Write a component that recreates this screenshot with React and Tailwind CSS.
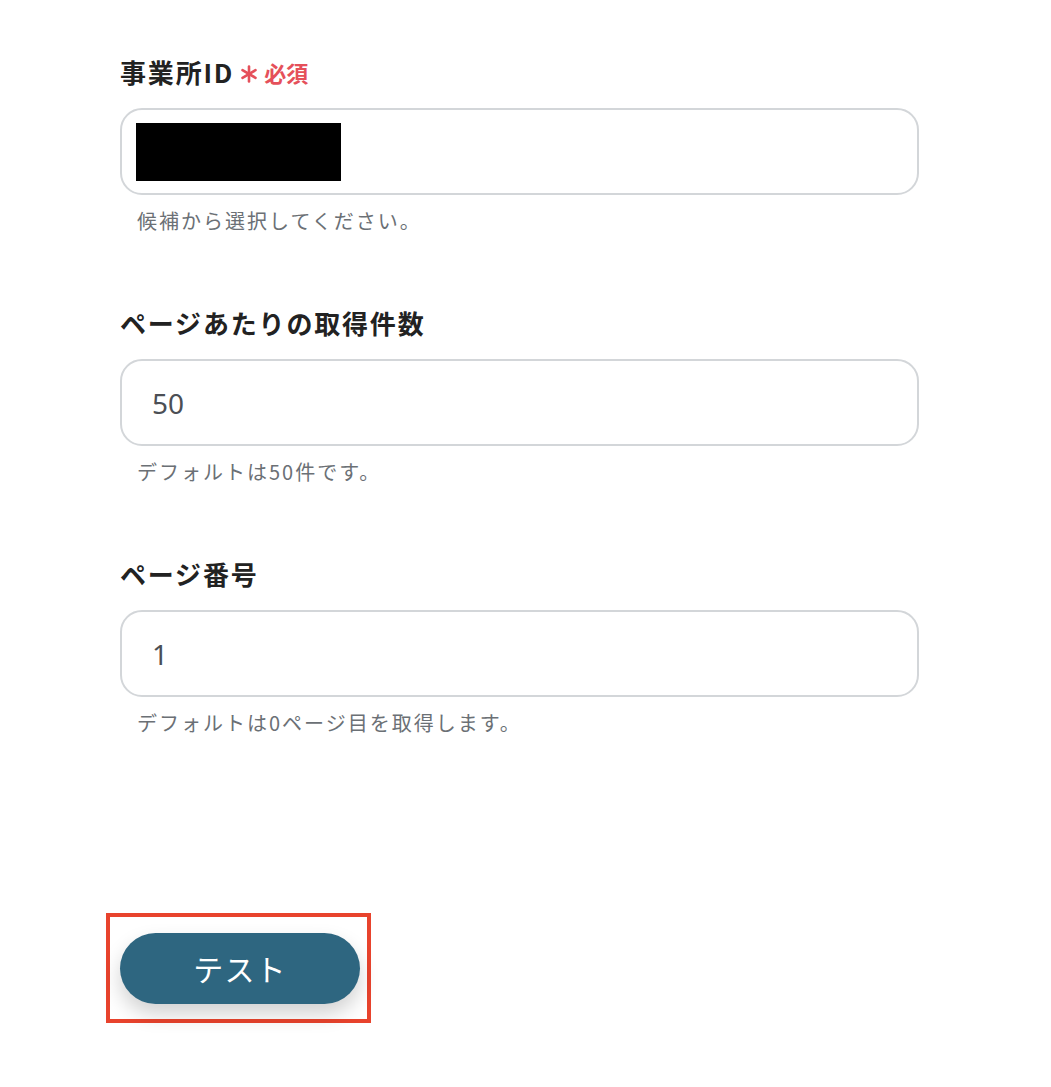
const FONT = { fontFamily: '"Noto Sans CJK JP", "Noto Sans", sans-serif' };

function Asterisk() {
  return (
    <svg width="18" height="18" viewBox="0 0 18 18" className="mr-[6px] mt-[4px]">
      <g stroke="#e5505a" strokeWidth="2.6" strokeLinecap="round">
        <line x1="9" y1="1.5" x2="9" y2="16.5" />
        <line x1="2.5" y1="5.2" x2="15.5" y2="12.8" />
        <line x1="2.5" y1="12.8" x2="15.5" y2="5.2" />
      </g>
    </svg>
  );
}

function Field({ label, required, value, help, masked }) {
  return (
    <div className="flex flex-col">
      <div className="flex items-center h-[30px] text-[26px] tracking-[0.07em] font-bold text-[#222] leading-none">
        <span>{label}</span>
        {required && (
          <span className="ml-[6px] flex items-center text-[#e5505a] text-[22px] tracking-normal">
            <Asterisk />
            必須
          </span>
        )}
      </div>
      <div className="mt-[21px] h-[87px] w-[799px] rounded-[22px] border-2 border-[#d3d6d9] bg-white flex items-center px-[30px]">
        {masked ? (
          <div className="w-[205px] h-[58px] bg-black -ml-[16px]" />
        ) : (
          <span className="text-[28px] text-[#4b4f55] font-normal" style={{ fontFamily: '"Noto Sans", sans-serif' }}>{value}</span>
        )}
      </div>
      <div className="mt-[14px] pl-[17px] text-[20px] leading-[24px] tracking-[0.1em] text-[#6b7075]">{help}</div>
    </div>
  );
}

export default function App() {
  return (
    <div className="min-h-screen bg-white" style={FONT}>
      <div className="pl-[120px] pt-[57px] flex flex-col gap-[75px]">
        <Field label="事業所ID" required masked help="候補から選択してください。" />
        <Field label="ページあたりの取得件数" value="50" help="デフォルトは50件です。" />
        <Field label="ページ番号" value="1" help="デフォルトは0ページ目を取得します。" />
      </div>
      <div className="ml-[106px] mt-[178px] w-[265px] h-[110px] border-4 border-[#e8432d] flex items-center justify-start pl-[10px]">
        <button className="w-[240px] h-[71px] rounded-full bg-[#2e6680] text-white text-[30px] tracking-[0.04em] shadow-[0_10px_20px_rgba(0,0,0,0.18)]">
          テスト
        </button>
      </div>
    </div>
  );
}
